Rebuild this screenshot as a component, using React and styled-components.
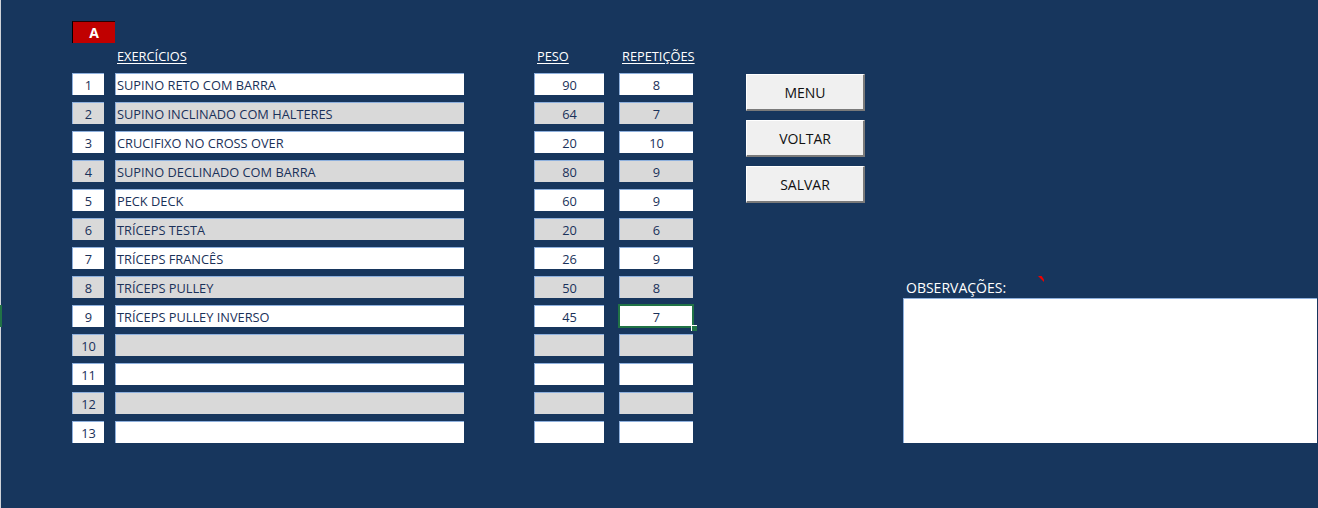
import React from "react";
import styled, { createGlobalStyle } from "styled-components";

const GlobalStyle = createGlobalStyle`
  html, body { margin: 0; padding: 0; background: #17365d; }
  #root { width: 1318px; height: 508px; }
`;

const NAVY = "#17365d";
const CELL_BORDER = "#8eb0dd";
const CELL_TEXT = "#1a3159";

const Page = styled.div`
  display: flex;
  width: 1318px;
  height: 508px;
  overflow: hidden;
  background: linear-gradient(to right, #cfd3d9 0 1px, ${NAVY} 1px);
  font-family: "Open Sans", "Liberation Sans", sans-serif;
`;

const Sheet = styled.section`
  flex: none;
  width: 694px;
  display: flex;
  flex-direction: column;
  padding-top: 21px;
`;

const Badge = styled.div`
  margin-left: 72px;
  width: 43px;
  height: 22px;
  box-sizing: border-box;
  background: #c00000;
  border-left: 1px solid #000;
  border-top: 1px solid #2a0000;
  color: #fff;
  font-weight: 700;
  font-size: 14px;
  display: flex;
  align-items: center;
  justify-content: center;
`;

const HeaderRow = styled.div`
  display: flex;
  align-items: flex-end;
  height: 23px;
  padding-bottom: 2px;
  box-sizing: border-box;
  margin-bottom: 7px;
`;

const HeaderLabel = styled.span`
  flex: none;
  width: ${(p) => p.$w}px;
  margin-left: ${(p) => p.$ml}px;
  padding-left: ${(p) => p.$pl ?? 3}px;
  box-sizing: border-box;
  color: #fff;
  font-size: 12.8px;
  line-height: 16px;
  text-decoration: underline;
  text-underline-offset: 2px;
  white-space: nowrap;
`;

const Row = styled.div`
  display: flex;
  height: 22px;
  margin-bottom: 7px;
`;

const RowMark = styled.div`
  flex: none;
  width: 2px;
  background: ${(p) => (p.$active ? "#217346" : "transparent")};
`;

const Cell = styled.div`
  position: relative;
  flex: none;
  width: ${(p) => p.$w}px;
  margin-left: ${(p) => p.$ml}px;
  box-sizing: border-box;
  border-top: 1px solid ${CELL_BORDER};
  border-left: 1px solid ${CELL_BORDER};
  background: ${(p) => (p.$shaded ? "#d9d9d9" : "#ffffff")};
  color: ${CELL_TEXT};
  font-size: 12.8px;
  display: flex;
  align-items: center;
  justify-content: ${(p) => (p.$align === "left" ? "flex-start" : "center")};
  padding-left: ${(p) => (p.$align === "left" ? "1px" : "0")};
  white-space: nowrap;
  outline: ${(p) => (p.$selected ? "2px solid #217346" : "none")};
  outline-offset: -1px;
`;

const FillHandle = styled.span`
  position: absolute;
  right: -4px;
  bottom: -4px;
  width: 5px;
  height: 5px;
  background: #217346;
  border-left: 1px solid #fff;
  border-top: 1px solid #fff;
`;

const ButtonColumn = styled.nav`
  flex: none;
  display: flex;
  flex-direction: column;
  gap: 9px;
  margin-left: 52px;
  padding-top: 74px;
`;

const SheetButton = styled.button`
  width: 119px;
  height: 37px;
  box-sizing: border-box;
  background: #f0f0f0;
  border: none;
  border-top: 1px solid #ffffff;
  border-left: 1px solid #ffffff;
  border-right: 2px solid #7a7a7a;
  border-bottom: 2px solid #7a7a7a;
  font-family: "Open Sans", "Liberation Sans", sans-serif;
  font-size: 14px;
  color: #111;
  padding: 0;
  cursor: pointer;
`;

const NotesColumn = styled.section`
  flex: 1;
  display: flex;
  flex-direction: column;
  margin-left: 38px;
  margin-right: 1px;
  padding-top: 278px;
`;

const NotesLabel = styled.div`
  position: relative;
  height: 20px;
  padding-left: 3px;
  color: #fff;
  font-size: 14px;
  line-height: 20px;
`;

const CommentMark = styled.span`
  position: absolute;
  left: 135px;
  top: -2px;
  width: 6px;
  height: 6px;
  background: #ee0000;
  clip-path: polygon(0 0, 60% 0, 100% 60%, 100% 100%);
`;

const NotesBox = styled.div`
  height: 145px;
  box-sizing: border-box;
  background: #fff;
  border-top: 1px solid ${CELL_BORDER};
  border-left: 1px solid ${CELL_BORDER};
`;

const rows = [
  ["SUPINO RETO COM BARRA", "90", "8"],
  ["SUPINO INCLINADO COM HALTERES", "64", "7"],
  ["CRUCIFIXO NO CROSS OVER", "20", "10"],
  ["SUPINO DECLINADO COM BARRA", "80", "9"],
  ["PECK DECK", "60", "9"],
  ["TRÍCEPS TESTA", "20", "6"],
  ["TRÍCEPS FRANCÊS", "26", "9"],
  ["TRÍCEPS PULLEY", "50", "8"],
  ["TRÍCEPS PULLEY INVERSO", "45", "7"],
  ["", "", ""],
  ["", "", ""],
  ["", "", ""],
  ["", "", ""],
];

export default function App() {
  return (
    <>
      <GlobalStyle />
      <Page>
        <Sheet>
          <Badge>A</Badge>
          <HeaderRow>
            <HeaderLabel $ml={115} $w={349} $pl={2}>EXERCÍCIOS</HeaderLabel>
            <HeaderLabel $ml={70} $w={70}>PESO</HeaderLabel>
            <HeaderLabel $ml={15} $w={80}>REPETIÇÕES</HeaderLabel>
          </HeaderRow>
          {rows.map(([name, peso, reps], i) => {
            const shaded = i % 2 === 1;
            const active = i === 8;
            return (
              <Row key={i}>
                <RowMark $active={active} />
                <Cell $ml={70} $w={32} $shaded={shaded}>{i + 1}</Cell>
                <Cell $ml={11} $w={349} $shaded={shaded} $align="left">{name}</Cell>
                <Cell $ml={70} $w={70} $shaded={shaded}>{peso}</Cell>
                <Cell $ml={15} $w={74} $shaded={shaded} $selected={active}>
                  {reps}
                  {active && <FillHandle />}
                </Cell>
              </Row>
            );
          })}
        </Sheet>
        <ButtonColumn>
          <SheetButton>MENU</SheetButton>
          <SheetButton>VOLTAR</SheetButton>
          <SheetButton>SALVAR</SheetButton>
        </ButtonColumn>
        <NotesColumn>
          <NotesLabel>
            OBSERVAÇÕES:
            <CommentMark />
          </NotesLabel>
          <NotesBox />
        </NotesColumn>
      </Page>
    </>
  );
}
